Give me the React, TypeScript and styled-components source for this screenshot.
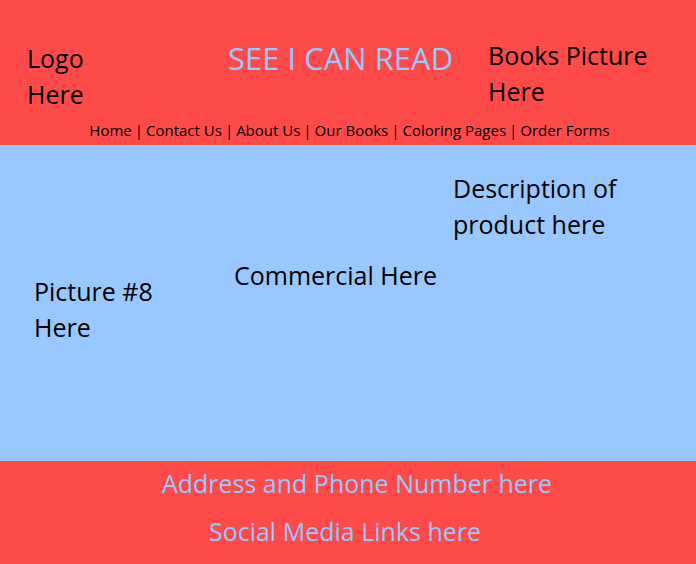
import React from "react";
import styled, { createGlobalStyle } from "styled-components";

const GlobalStyle = createGlobalStyle`
  * { box-sizing: border-box; }
  body {
    margin: 0;
    font-family: "Segoe UI", "Open Sans", "Noto Sans", sans-serif;
    color: #000;
  }
  h1, p { margin: 0; font-weight: 400; }
`;

const Page = styled.div`
  min-height: 100vh;
  display: flex;
  flex-direction: column;
  background: #ff4a4a;
`;

const Header = styled.header`
  padding: 37px 28px 5px 27px;
`;

const Banner = styled.div`
  display: grid;
  grid-template-columns: 201px 1fr 180px;
`;

const Note = styled.p`
  font-size: 25px;
  line-height: 36px;
`;

const LogoNote = styled(Note)`
  width: 100px;
  padding-top: 3px;
`;

const Title = styled.h1`
  font-size: 31px;
  line-height: 42px;
  color: #99c7ff;
  white-space: nowrap;
`;

const Nav = styled.nav`
  display: flex;
  justify-content: center;
  gap: 3px;
  margin-top: 8px;
  padding-left: 4px;
  font-size: 15px;
  line-height: 20px;
  white-space: nowrap;
`;

const NavLink = styled.a`
  color: inherit;
  text-decoration: none;
`;

const Main = styled.main`
  flex: 1;
  display: grid;
  grid-template-columns: 200px 1fr 209px;
  padding: 25px 34px;
  background: #99c7ff;
`;

const PictureNote = styled(Note)`
  width: 140px;
  padding-top: 103px;
`;

const CommercialNote = styled(Note)`
  padding-top: 87px;
  white-space: nowrap;
`;

const Footer = styled.footer`
  display: grid;
  gap: 12px;
  padding: 4px 0 15px 18px;
  color: #99c7ff;
  text-align: center;
`;

const SocialNote = styled(Note)`
  padding-right: 24px;
`;

const links = ["Home", "Contact Us", "About Us", "Our Books", "Coloring Pages", "Order Forms"];

export default function App() {
  return (
    <Page>
      <GlobalStyle />
      <Header>
        <Banner>
          <LogoNote>Logo Here</LogoNote>
          <Title>SEE I CAN READ</Title>
          <Note>Books Picture Here</Note>
        </Banner>
        <Nav>
          {links.map((label, index) => (
            <React.Fragment key={label}>
              {index > 0 && <span>|</span>}
              <NavLink href="#">{label}</NavLink>
            </React.Fragment>
          ))}
        </Nav>
      </Header>
      <Main>
        <PictureNote>Picture #8 Here</PictureNote>
        <CommercialNote>Commercial Here</CommercialNote>
        <Note>Description of product here</Note>
      </Main>
      <Footer>
        <Note>Address and Phone Number here</Note>
        <SocialNote>Social Media Links here</SocialNote>
      </Footer>
    </Page>
  );
}
